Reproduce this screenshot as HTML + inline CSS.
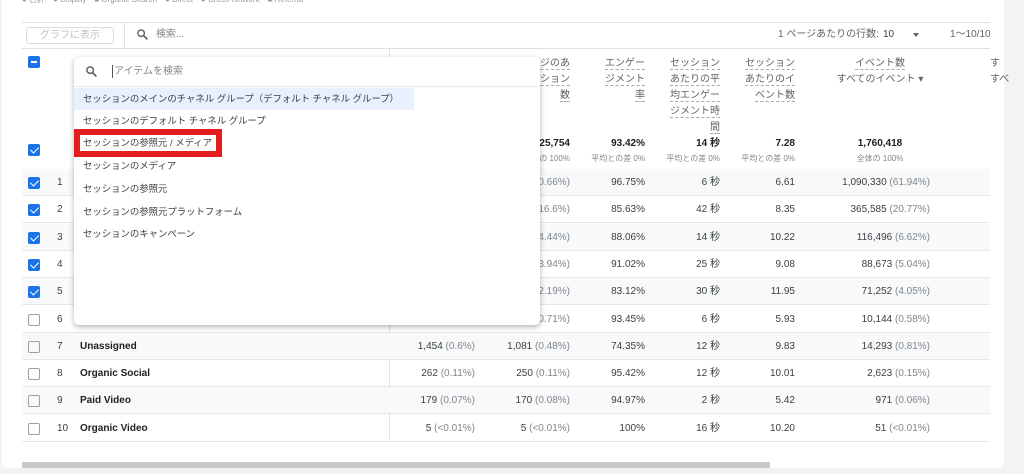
<!DOCTYPE html>
<html><head><meta charset="utf-8">
<style>
*{box-sizing:border-box;margin:0;padding:0}
body{width:1024px;height:474px;overflow:hidden;background:#f1f3f4;font-family:"Liberation Sans","Noto Sans CJK JP",sans-serif;color:#3c4043;position:relative;line-height:12px}
.card{position:absolute;left:2px;top:-10px;width:1002px;height:478px;background:#fff;border-radius:6px}
.a{position:absolute;white-space:nowrap;line-height:12px}
.hl{position:absolute;height:1px;background:#e0e0e0}
.row{position:absolute;left:22px;width:968px;height:27px;border-bottom:1px solid #e6e6e6}
.g{background:#f8f9fa}
.cb{position:absolute;left:28px;width:12px;height:12px;border-radius:2px}
.on{background:#1a73e8}
.on::after{content:"";position:absolute;left:3.5px;top:1px;width:4px;height:7px;border:solid #fff;border-width:0 1.6px 1.6px 0;transform:rotate(45deg)}
.minus{background:#1a73e8}
.off{border:1.5px solid #9aa0a6}
.n{position:absolute;font-size:10px;text-align:right;line-height:12px;white-space:nowrap}
.n span{color:#80868b}
.num{font-size:10px;color:#3c4043}
.lab{font-size:10px;font-weight:bold;color:#202124}
.hd{position:absolute;font-size:10px;text-align:right;line-height:16px;color:#5f6368}
.hd u{text-decoration:none;border-bottom:1px dashed #aaa}
.item{position:absolute;left:74px;height:22px;line-height:22px;padding-left:9px;font-size:9.4px;color:#3c4043;width:340px;white-space:nowrap;overflow:hidden}
</style></head><body>
<div class="card"></div>
<div class="a" style="left:22px;top:-6px;font-size:8px;color:#999">● 合計　● Display　■ Organic Search　● Direct　● Cross-network　■ Referral</div>
<div class="hl" style="left:22px;top:22px;width:968px"></div>
<div class="hl" style="left:22px;top:48px;width:968px"></div>
<div class="a" style="left:26px;top:27px;width:88px;height:17px;border:1px solid #dadce0;border-radius:3px;font-size:10px;color:#bdc1c6;text-align:center;line-height:15px">グラフに表示</div>
<div style="position:absolute;left:124px;top:22px;width:1px;height:26px;background:#e0e0e0"></div>
<svg class="a" style="left:136px;top:28px" width="13" height="13" viewBox="0 0 24 24"><circle cx="9.5" cy="9.5" r="6" fill="none" stroke="#5f6368" stroke-width="2.6"/><path d="M14 14l7 7" stroke="#5f6368" stroke-width="3"/></svg>
<div class="a" style="left:156px;top:29px;font-size:10px;color:#80868b">検索...</div>
<div class="a" style="left:778px;top:29px;font-size:10px;color:#5f6368">1 ページあたりの行数:</div>
<div class="a" style="left:883px;top:29px;font-size:10px;color:#3c4043">10</div>
<div class="a" style="left:913px;top:33px;border:3.5px solid transparent;border-top:4px solid #5f6368"></div>
<div class="a" style="left:950px;top:29px;font-size:10px;color:#5f6368">1〜10/10</div>
<div style="position:absolute;left:389px;top:48px;width:1px;height:394px;background:#e0e0e0"></div>
<div class="cb minus" style="top:56px"></div>
<div class="a" style="left:31px;top:61px;width:6px;height:2px;background:#fff"></div>
<div class="cb on" style="top:144px"></div>
<!-- headers -->
<div class="hd" style="left:500px;top:56px;width:70px"><u>ージのあ</u><br><u>ッション</u><br><u>数</u></div>
<div class="hd" style="left:595px;top:56px;width:50px"><u>エンゲー</u><br><u>ジメント</u><br><u>率</u></div>
<div class="hd" style="left:660px;top:56px;width:60px"><u>セッション</u><br><u>あたりの平</u><br><u>均エンゲー</u><br><u>ジメント時</u><br><u>間</u></div>
<div class="hd" style="left:735px;top:56px;width:60px"><u>セッション</u><br><u>あたりのイ</u><br><u>ベント数</u></div>
<div class="hd" style="left:820px;top:56px;width:120px;text-align:center"><u>イベント数</u><br>すべてのイベント ▾</div>
<div class="hd" style="left:990px;top:56px;width:40px;text-align:left">す<br>すべ</div>
<div class="n" style="left:500px;top:138px;width:70px;font-weight:bold;color:#202124">25,754</div>
<div class="n" style="left:500px;top:153px;width:70px;font-size:8px;color:#80868b">の 100%</div>
<div class="n" style="left:585px;top:138px;width:60px;font-weight:bold;color:#202124">93.42%</div>
<div class="n" style="left:585px;top:153px;width:60px;font-size:8px;color:#80868b">平均との差 0%</div>
<div class="n" style="left:660px;top:138px;width:60px;font-weight:bold;color:#202124">14 秒</div>
<div class="n" style="left:660px;top:153px;width:60px;font-size:8px;color:#80868b">平均との差 0%</div>
<div class="n" style="left:735px;top:138px;width:60px;font-weight:bold;color:#202124">7.28</div>
<div class="n" style="left:735px;top:153px;width:60px;font-size:8px;color:#80868b">平均との差 0%</div>
<div class="n" style="left:820px;top:138px;width:120px;text-align:center;font-weight:bold;color:#202124">1,760,418</div>
<div class="n" style="left:820px;top:153px;width:120px;text-align:center;font-size:8px;color:#80868b">全体の 100%</div>
<div class="hl" style="left:22px;top:169px;width:968px"></div>

<div id="rows"></div>
<script>
var R=[
["1","","","(0.66%)","96.75%","6 秒","6.61","1,090,330","(61.94%)",1],
["2","","","(16.6%)","85.63%","42 秒","8.35","365,585","(20.77%)",1],
["3","","","(4.44%)","88.06%","14 秒","10.22","116,496","(6.62%)",1],
["4","","","(3.94%)","91.02%","25 秒","9.08","88,673","(5.04%)",1],
["5","","","(2.19%)","83.12%","30 秒","11.95","71,252","(4.05%)",1],
["6","","","(0.71%)","93.45%","6 秒","5.93","10,144","(0.58%)",0],
["7","Unassigned","1,454 <span>(0.6%)</span>","1,081 <span>(0.48%)</span>","74.35%","12 秒","9.83","14,293","(0.81%)",0],
["8","Organic Social","262 <span>(0.11%)</span>","250 <span>(0.11%)</span>","95.42%","12 秒","10.01","2,623","(0.15%)",0],
["9","Paid Video","179 <span>(0.07%)</span>","170 <span>(0.08%)</span>","94.97%","2 秒","5.42","971","(0.06%)",0],
["10","Organic Video","5 <span>(&lt;0.01%)</span>","5 <span>(&lt;0.01%)</span>","100%","16 秒","10.20","51","(&lt;0.01%)",0]];
var h="";
for(var i=0;i<10;i++){var r=R[i],t=169+i*27.3,c=t+8;
h+='<div class="row'+(i%2==0?' g':'')+'" style="top:'+t+'px"></div>';
h+='<div class="cb '+(r[9]?'on':'off')+'" style="top:'+(c)+'px"></div>';
h+='<div class="a num" style="left:57px;top:'+c+'px">'+r[0]+'</div>';
h+='<div class="a lab" style="left:80px;top:'+c+'px">'+r[1]+'</div>';
h+='<div class="n" style="left:380px;top:'+c+'px;width:95px">'+r[2]+'</div>';
h+='<div class="n" style="left:470px;top:'+c+'px;width:100px">'+(r[3].indexOf('<')>=0?r[3]:'<span>'+r[3]+'</span>')+'</div>';
h+='<div class="n" style="left:585px;top:'+c+'px;width:60px">'+r[4]+'</div>';
h+='<div class="n" style="left:660px;top:'+c+'px;width:60px">'+r[5]+'</div>';
h+='<div class="n" style="left:735px;top:'+c+'px;width:60px">'+r[6]+'</div>';
h+='<div class="n" style="left:800px;top:'+c+'px;width:130px">'+r[7]+' <span>'+r[8]+'</span></div>';}
document.getElementById('rows').innerHTML=h;
</script>
<div style="position:absolute;left:22px;top:462px;width:748px;height:6px;background:#c8c8c8"></div>
<!-- popup -->
<div style="position:absolute;left:74px;top:57px;width:466px;height:268px;background:#fff;border-radius:5px;box-shadow:0 2px 6px rgba(0,0,0,.3)"></div>
<div class="hl" style="left:74px;top:86px;width:466px;background:#eaeaea"></div>
<svg class="a" style="left:85px;top:65px" width="13" height="13" viewBox="0 0 24 24"><circle cx="9.5" cy="9.5" r="6" fill="none" stroke="#5f6368" stroke-width="2.8"/><path d="M14 14l7 7" stroke="#5f6368" stroke-width="3.2"/></svg>
<div class="a" style="left:112px;top:65px;width:1px;height:13px;background:#555"></div>
<div class="a" style="left:114px;top:66px;font-size:10px;color:#80868b">アイテムを検索</div>
<div class="item" style="top:88px;background:#e8f0fe">セッションのメインのチャネル グループ（デフォルト チャネル グループ）</div>
<div class="item" style="top:110px">セッションのデフォルト チャネル グループ</div>
<div style="position:absolute;left:74px;top:129px;width:148px;height:28px;background:#e41e1e"></div>
<div style="position:absolute;left:80px;top:135px;width:136px;height:16px;background:#fff"></div>
<div class="item" style="top:132px;width:148px">セッションの参照元 / メディア</div>
<div class="item" style="top:155px">セッションのメディア</div>
<div class="item" style="top:178px">セッションの参照元</div>
<div class="item" style="top:201px">セッションの参照元プラットフォーム</div>
<div class="item" style="top:223px">セッションのキャンペーン</div>
</body></html>
